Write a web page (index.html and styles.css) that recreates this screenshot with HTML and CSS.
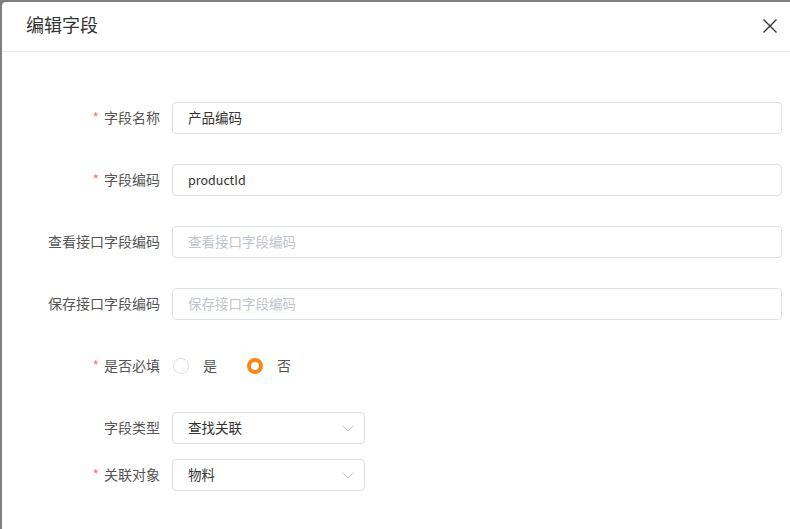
FILE: index.html
```html
<!DOCTYPE html>
<html lang="zh">
<head>
<meta charset="utf-8">
<link rel="stylesheet" href="styles.css">
</head>
<body>
<div class="dialog">
  <div class="header">
    <span class="title">编辑字段</span>
    <span class="close">
      <svg width="14" height="14" viewBox="0 0 14 14"><path d="M0.5 0.5L13.5 13.5M13.5 0.5L0.5 13.5" stroke="#333" stroke-width="1.4" fill="none"/></svg>
    </span>
  </div>
  <div class="form">
    <div class="row">
      <label class="label"><span class="req">*</span>字段名称</label>
      <div class="input">产品编码</div>
    </div>
    <div class="row">
      <label class="label"><span class="req">*</span>字段编码</label>
      <div class="input latin">productId</div>
    </div>
    <div class="row">
      <label class="label">查看接口字段编码</label>
      <div class="input placeholder">查看接口字段编码</div>
    </div>
    <div class="row">
      <label class="label">保存接口字段编码</label>
      <div class="input placeholder">保存接口字段编码</div>
    </div>
    <div class="row">
      <label class="label"><span class="req">*</span>是否必填</label>
      <div class="radios">
        <span class="radio"><span class="dot"></span><span class="rtext">是</span></span>
        <span class="radio checked"><span class="dot"></span><span class="rtext">否</span></span>
      </div>
    </div>
    <div class="row tight">
      <label class="label">字段类型</label>
      <div class="input select">查找关联<svg class="chev" width="12" height="7" viewBox="0 0 12 7"><path d="M0.5 0.5L6 6L11.5 0.5" stroke="#c0c4cc" stroke-width="1" fill="none"/></svg></div>
    </div>
    <div class="row">
      <label class="label"><span class="req">*</span>关联对象</label>
      <div class="input select">物料<svg class="chev" width="12" height="7" viewBox="0 0 12 7"><path d="M0.5 0.5L6 6L11.5 0.5" stroke="#c0c4cc" stroke-width="1" fill="none"/></svg></div>
    </div>
  </div>
</div>
</body>
</html>
```

FILE: styles.css
```css
html, body {
  margin: 0;
  padding: 0;
}
body {
  background: #7f7f7f;
  width: 790px;
  height: 529px;
  overflow: hidden;
  font-family: "Noto Sans CJK SC", "Noto Sans", sans-serif;
  font-size: 14px;
  color: #333;
}
.dialog {
  margin: 2px 0 0 2px;
  height: 527px;
  background: #fff;
  border-top-left-radius: 4px;
}
.header {
  height: 49px;
  border-bottom: 1px solid #e6e6e6;
  display: flex;
  align-items: center;
  justify-content: space-between;
  padding: 0 13px 0 24px;
}
.title {
  font-size: 18px;
  color: #333;
  line-height: 24px;
  margin-top: -6px;
}
.close {
  display: flex;
  margin-top: -1px;
}
.form {
  padding: 50px 8px 0 0;
}
.row {
  display: flex;
  align-items: center;
  height: 32px;
  margin-bottom: 30px;
}
.row.tight {
  margin-bottom: 15px;
}
.label {
  width: 158px;
  padding-right: 12px;
  padding-bottom: 3px;
  text-align: right;
  color: #555;
  flex: none;
  box-sizing: content-box;
}
.req {
  color: #f57a7a;
  margin-right: 5px;
}
.input {
  flex: 1;
  height: 32px;
  box-sizing: border-box;
  border: 1px solid #dcdfe6;
  border-radius: 4px;
  padding: 0 15px 2px;
  display: flex;
  align-items: center;
  color: #333;
  font-size: 13.5px;
}
.input.latin {
  font-size: 12.5px;
}
.input.placeholder {
  color: #c0c4cc;
}
.input.select {
  flex: none;
  width: 193px;
  justify-content: space-between;
  padding-right: 10px;
}
.chev {
  margin-top: 2px;
}
.radios {
  display: flex;
  align-items: center;
  gap: 30px;
  padding-left: 1px;
}
.radio {
  display: flex;
  align-items: center;
  gap: 14px;
  color: #555;
}
.rtext {
  margin-top: -3px;
}
.dot {
  width: 16px;
  height: 16px;
  box-sizing: border-box;
  border: 1px solid #dcdfe6;
  border-radius: 50%;
  background: #fff;
}
.radio.checked .dot {
  border: 4px solid #fd8514;
}
```
